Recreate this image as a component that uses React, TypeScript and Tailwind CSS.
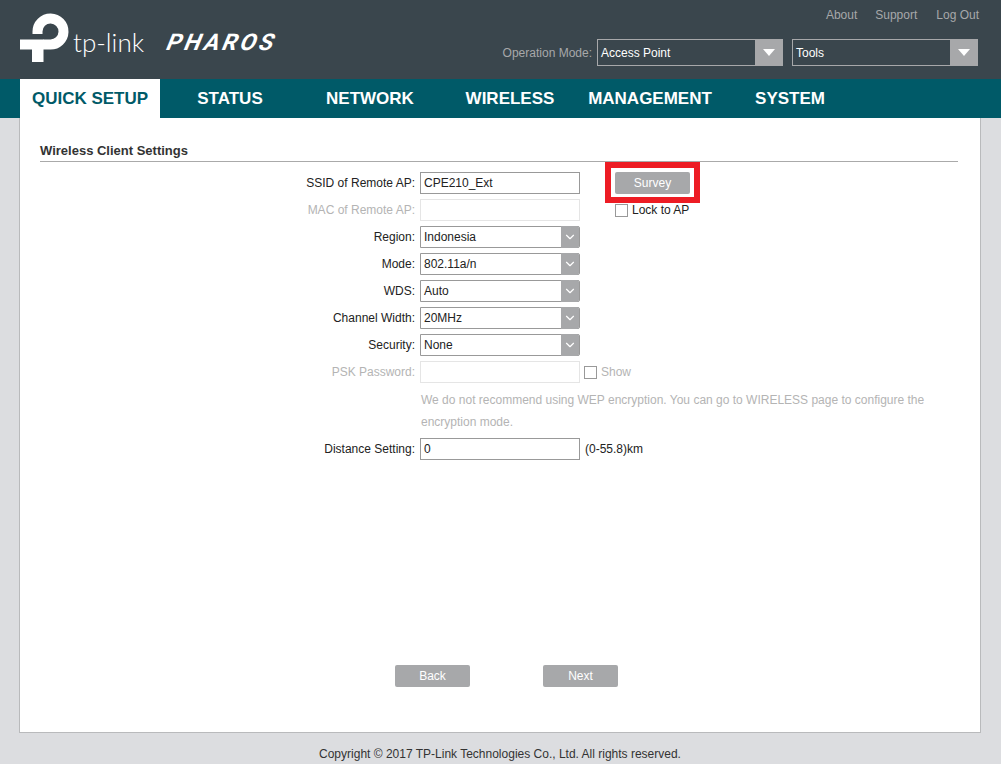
import { ChevronDown } from 'lucide-react';

const tabs = ['QUICK SETUP', 'STATUS', 'NETWORK', 'WIRELESS', 'MANAGEMENT', 'SYSTEM'];

function Logo() {
    return (
        <svg width="50" height="50" viewBox="20 13 50 50" className="shrink-0">
            <path d="M20 39.5H43.5V62H32V49.5H20Z" fill="#fff" />
            <path d="M37.5 34V31.5A13 13 0 1 1 50 44.5H43" fill="none" stroke="#fff" strokeWidth="10" />
        </svg>
    );
}

function TopSelect({ value }: { value: string }) {
    return (
        <div className="flex h-[27px] w-[186px] items-center border border-[#a7a8aa] pl-[3px] text-white">
            <span className="flex-1">{value}</span>
            <div className="flex h-[27px] w-[27px] items-center justify-center bg-[#a7a8aa]">
                <div className="h-0 w-0 border-x-[6px] border-t-[7px] border-x-transparent border-t-white" />
            </div>
        </div>
    );
}

function Select({ value }: { value: string }) {
    return (
        <div className="flex h-[22px] w-[160px] items-center rounded-r-[2px] border border-[#999] pl-[3px]">
            <span className="flex-1 text-[#222]">{value}</span>
            <div className="flex h-[22px] w-[18px] items-center justify-center rounded-r-[2px] bg-[#a7a8aa]">
                <ChevronDown className="h-[14px] w-[14px] text-white" strokeWidth={2} />
            </div>
        </div>
    );
}

function TextInput({ value, disabled }: { value?: string; disabled?: boolean }) {
    return (
        <div className={`flex h-[22px] w-[160px] items-center border pl-[3px] text-[#222] ${disabled ? 'border-[#e5e5e5]' : 'border-[#999]'}`}>
            {value}
        </div>
    );
}

function Row({ label, disabled, children }: { label: string; disabled?: boolean; children: React.ReactNode }) {
    return (
        <div className="flex h-[22px] items-center">
            <label className={`w-[375px] pr-0 text-right ${disabled ? 'text-[#b4b4b4]' : 'text-[#222]'}`}>{label}</label>
            <div className="ml-[5px] flex items-center">{children}</div>
        </div>
    );
}

function Btn({ label }: { label: string }) {
    return (
        <button className="h-[22px] w-[75px] rounded-[2px] bg-[#a7a8aa] text-center text-[12px] text-white">
            {label}
        </button>
    );
}

function Checkbox() {
    return <div className="h-[13px] w-[13px] border border-[#999] bg-white" />;
}

export default function App() {
    return (
        <div className="flex h-[764px] flex-col overflow-hidden bg-[#dcdde0] font-['Liberation_Sans',Arial,sans-serif] text-[12px]">
            {/* Header */}
            <div className="relative h-[79px] shrink-0 bg-[#3a464d]">
                <div className="flex items-start pt-[13px] pl-[20px]">
                    <Logo />
                    <span className="mt-[13px] ml-[3px] font-['Lato',sans-serif] text-[26px] leading-[32px] font-light text-white">tp-link</span>
                    <span className="mt-[17px] ml-[18px] inline-block origin-bottom -skew-x-[22deg] font-['Roboto',sans-serif] text-[23px] leading-[26px] font-bold tracking-[3px] text-white">PHAROS</span>
                </div>
                <div className="absolute top-[6px] right-[22px] flex gap-[18px] text-[#a7a8aa]">
                    <span>About</span>
                    <span className="mr-[1px]">Support</span>
                    <span>Log Out</span>
                </div>
                <div className="absolute top-[39px] right-[23px] flex items-center">
                    <span className="mr-[5px] text-[#a7a8aa]">Operation Mode:</span>
                    <TopSelect value="Access Point" />
                    <div className="w-[9px]" />
                    <TopSelect value="Tools" />
                </div>
            </div>

            {/* Nav */}
            <div className="flex h-[39px] shrink-0 bg-[#005a68] pl-[20px]">
                {tabs.map((tab, i) => (
                    <div
                        key={tab}
                        className={`flex w-[140px] items-center justify-center text-[17px] font-bold ${i === 0 ? 'bg-white text-[#005a68]' : 'text-white'}`}
                    >
                        {tab}
                    </div>
                ))}
            </div>

            {/* Panel */}
            <div className="mr-[20px] ml-[19px] flex h-[615px] shrink-0 flex-col border-x border-b border-[#b9babc] bg-white pr-[22px] pl-[20px]">
                <div className="mt-[23px] flex h-[21px] items-center border-b border-[#aaa] pb-[1px] text-[13px] font-bold text-[#333]">
                    Wireless Client Settings
                </div>

                <div className="mt-[10px] flex flex-col gap-[5px]">
                    <Row label="SSID of Remote AP:">
                        <TextInput value="CPE210_Ext" />
                        <div className="relative ml-[35px]">
                            <Btn label="Survey" />
                            <div className="absolute -top-[10px] -right-[10px] -bottom-[9px] -left-[10px] border-[6px] border-[#ed1c24]" />
                        </div>
                    </Row>
                    <Row label="MAC of Remote AP:" disabled>
                        <TextInput disabled />
                        <div className="ml-[35px] flex items-center gap-[4px] text-[#222]">
                            <Checkbox />
                            <span>Lock to AP</span>
                        </div>
                    </Row>
                    <Row label="Region:"><Select value="Indonesia" /></Row>
                    <Row label="Mode:"><Select value="802.11a/n" /></Row>
                    <Row label="WDS:"><Select value="Auto" /></Row>
                    <Row label="Channel Width:"><Select value="20MHz" /></Row>
                    <Row label="Security:"><Select value="None" /></Row>
                    <Row label="PSK Password:" disabled>
                        <TextInput disabled />
                        <div className="ml-[4px] flex items-center gap-[4px] text-[#b4b4b4]">
                            <Checkbox />
                            <span>Show</span>
                        </div>
                    </Row>
                    <p className="ml-[381px] h-[45px] w-[510px] pt-[1px] leading-[22px] text-[#b4b4b4]">
                        We do not recommend using WEP encryption. You can go to WIRELESS page to configure the encryption mode.
                    </p>
                    <Row label="Distance Setting:">
                        <TextInput value="0" />
                        <span className="ml-[5px] text-[#222]">(0-55.8)km</span>
                    </Row>
                </div>

                <div className="mt-auto mb-[45px] flex gap-[73px] pl-[355px]">
                    <Btn label="Back" />
                    <Btn label="Next" />
                </div>
            </div>

            {/* Footer */}
            <div className="flex h-[31px] items-center justify-center pt-[10px] pr-[1px] text-[#333]">
                Copyright © 2017 TP-Link Technologies Co., Ltd. All rights reserved.
            </div>
        </div>
    );
}
